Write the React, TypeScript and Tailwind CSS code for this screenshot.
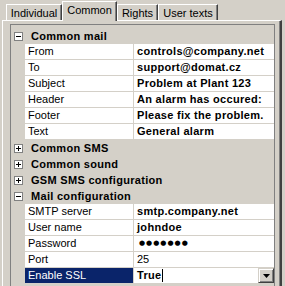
type Prop = { name: string; value: string; bold?: boolean; selected?: boolean; password?: boolean }
type Section = { title: string; open: boolean; items: Prop[] }

const sections: Section[] = [
  {
    title: 'Common mail',
    open: true,
    items: [
      { name: 'From', value: 'controls@company.net', bold: true },
      { name: 'To', value: 'support@domat.cz', bold: true },
      { name: 'Subject', value: 'Problem at Plant 123', bold: true },
      { name: 'Header', value: 'An alarm has occured:', bold: true },
      { name: 'Footer', value: 'Please fix the problem.', bold: true },
      { name: 'Text', value: 'General alarm', bold: true },
    ],
  },
  { title: 'Common SMS', open: false, items: [] },
  { title: 'Common sound', open: false, items: [] },
  { title: 'GSM SMS configuration', open: false, items: [] },
  {
    title: 'Mail configuration',
    open: true,
    items: [
      { name: 'SMTP server', value: 'smtp.company.net', bold: true },
      { name: 'User name', value: 'johndoe', bold: true },
      { name: 'Password', value: '●●●●●●●', bold: true, password: true },
      { name: 'Port', value: '25' },
      { name: 'Enable SSL', value: 'True', bold: true, selected: true },
    ],
  },
]

const tabs = [
  { label: 'Individual', w: 'w-[56px]' },
  { label: 'Common', w: 'w-[55px]', active: true },
  { label: 'Rights', w: 'w-[41px]' },
  { label: 'User texts', w: 'w-[60px]' },
]

function ExpandBox({ open }: { open: boolean }) {
  return (
    <svg width="9" height="9" viewBox="0 0 9 9" className="block">
      <rect x="0.5" y="0.5" width="8" height="8" fill="#fff" stroke="#808080" />
      <path d="M2 4.5h5" stroke="#000" />
      {!open && <path d="M4.5 2v5" stroke="#000" />}
    </svg>
  )
}

function DropButton() {
  return (
    <div className="flex h-[15px] w-[16px] items-center justify-center border-t border-l border-t-[#d4d0c8] border-l-[#d4d0c8] border-r border-b border-r-[#404040] border-b-[#404040] bg-[#d4d0c8] shadow-[inset_1px_1px_#fff,inset_-1px_-1px_#808080]">
      <svg width="7" height="4" viewBox="0 0 7 4" className="block">
        <polygon points="0,0 7,0 3.5,4" fill="#000" />
      </svg>
    </div>
  )
}

function PropRow({ p }: { p: Prop }) {
  return (
    <div className="flex h-[16px]">
      <div className="w-[14px]" />
      <div className="flex flex-1 border-b border-[#d4d0c8]">
        <div className={`w-[108px] pl-[3px] ${p.selected ? 'bg-[#0a246a] text-white' : 'bg-white text-black'}`}>
          {p.name}
        </div>
        <div className="w-px bg-[#d4d0c8]" />
        <div className="flex flex-1 items-center bg-white pl-[3px]">
          {p.password ? (
            <span className="pl-[2px] font-['DejaVu_Sans',sans-serif] text-[7px] tracking-[1px]">{p.value}</span>
          ) : (
            <span className={p.bold ? 'font-bold tracking-[0.3px]' : ''}>{p.value}</span>
          )}
          {p.selected && (
            <>
              <span className="ml-[1px] h-[13px] w-px bg-black" />
              <div className="ml-auto">
                <DropButton />
              </div>
            </>
          )}
        </div>
      </div>
    </div>
  )
}

export default function App() {
  return (
    <div className="h-[286px] w-[285px] overflow-hidden bg-[#d4d0c8] font-['Liberation_Sans',Arial,sans-serif] text-[11px] leading-[15px] text-black">
      {/* Tabs */}
      <div className="flex h-[20px] items-end pl-[6px]">
        {tabs.map((t) =>
          t.active ? (
            <div
              key={t.label}
              className={`relative z-10 -mb-[1px] flex h-[20px] ${t.w} justify-center border-t border-l border-white border-r border-r-[#404040] bg-[#d4d0c8] pt-[1px] shadow-[inset_-1px_0_#808080]`}
            >
              {t.label}
            </div>
          ) : (
            <div
              key={t.label}
              className={`flex h-[16px] ${t.w} justify-center border-t border-l border-white border-r border-r-[#404040] bg-[#d4d0c8] pt-[1px] shadow-[inset_-1px_0_#808080]`}
            >
              {t.label}
            </div>
          )
        )}
      </div>

      {/* Panel */}
      <div className="ml-[2px] h-[280px] w-[280px] border-t border-l border-white border-r-2 border-r-[#404040] pl-[7px] pt-[3px] shadow-[inset_-1px_0_#808080]">
        <div className="h-[300px] w-[265px] border border-[#808080] bg-[#d4d0c8] pt-[3px]">
          {sections.map((s) => (
            <div key={s.title}>
              <div className="flex h-[16px] items-center">
                <div className="flex w-[14px] justify-center">
                  <ExpandBox open={s.open} />
                </div>
                <span className="pl-[6px] font-bold tracking-[0.3px]">{s.title}</span>
              </div>
              {s.open && s.items.map((p) => <PropRow key={p.name} p={p} />)}
            </div>
          ))}
        </div>
      </div>
    </div>
  )
}
